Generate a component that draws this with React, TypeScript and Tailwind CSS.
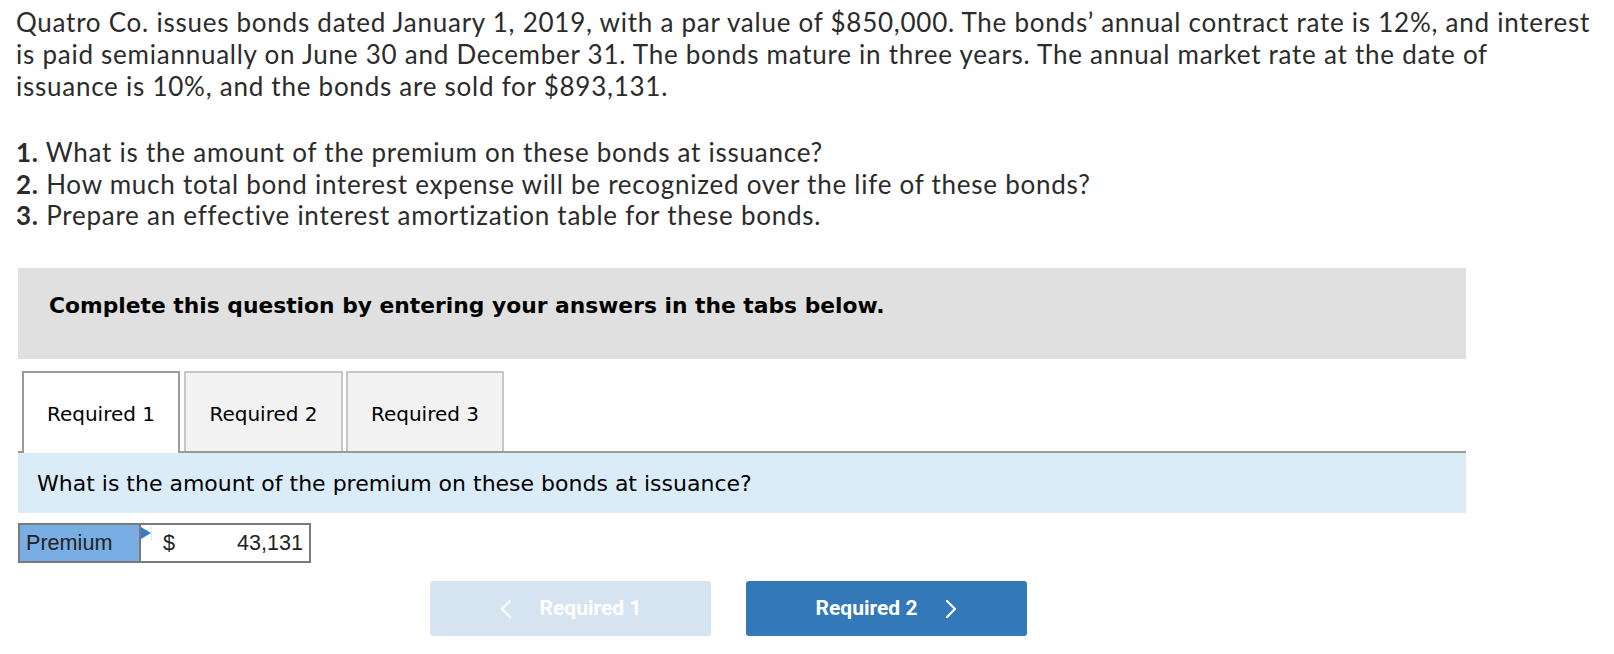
import React from 'react';

function Chevron({ dir }: { dir: 'left' | 'right' }) {
    return (
        <svg width="12" height="20" viewBox="0 0 12 20" fill="none" stroke="currentColor" strokeWidth="2.2" strokeLinecap="round" strokeLinejoin="round">
            {dir === 'left' ? <polyline points="10,2 2,10 10,18" /> : <polyline points="2,2 10,10 2,18" />}
        </svg>
    );
}

export default function App() {
    const body = { fontFamily: 'Lato, "Noto Sans", sans-serif' };
    const verdana = { fontFamily: 'Verdana, "DejaVu Sans", sans-serif' };
    const arial = { fontFamily: 'Arial, "Liberation Sans", sans-serif' };
    const roboto = { fontFamily: 'Roboto, "Noto Sans", sans-serif' };

    return (
        <div className="w-[1614px] h-[654px] overflow-hidden bg-white text-[#2b2b2b]">
            {/* Question text */}
            <div className="pl-[16px] pt-[6px] text-[26px] tracking-[0.75px]" style={body}>
                <p className="leading-[32px] h-[96px]">
                    Quatro Co. issues bonds dated January 1, 2019, with a par value of $850,000. The bonds’ annual contract rate is 12%, and interest<br />
                    is paid semiannually on June 30 and December 31. The bonds mature in three years. The annual market rate at the date of<br />
                    issuance is 10%, and the bonds are sold for $893,131.
                </p>
                <div className="mt-[35px] leading-[31.5px] h-[93px]">
                    <div><span className="font-bold">1.</span> What is the amount of the premium on these bonds at issuance?</div>
                    <div><span className="font-bold">2.</span> How much total bond interest expense will be recognized over the life of these bonds?</div>
                    <div><span className="font-bold">3.</span> Prepare an effective interest amortization table for these bonds.</div>
                </div>
            </div>

            <div className="ml-[18px] w-[1448px]">
                {/* Instruction banner */}
                <div className="mt-[38px] h-[91px] bg-[#e0e0e0] flex items-center pl-[31px] pb-[14px] text-black font-bold text-[21.8px]" style={verdana}>
                    Complete this question by entering your answers in the tabs below.
                </div>

                {/* Tabs */}
                <div className="mt-[12px] flex items-end border-b-2 border-[#999999] text-black text-[20px]" style={verdana}>
                    <div className="ml-[4px] -mb-[2px] w-[158px] h-[82px] border-2 border-b-0 border-[#9a9a9a] bg-white flex items-center justify-center pt-[2px]">
                        Required 1
                    </div>
                    <div className="ml-[4px] w-[159px] h-[80px] border-2 border-b-0 border-[#c6c6c6] bg-[#f2f2f2] flex items-center justify-center pt-[4px]">
                        Required 2
                    </div>
                    <div className="ml-[3px] w-[158px] h-[80px] border-2 border-b-0 border-[#c6c6c6] bg-[#f2f2f2] flex items-center justify-center pt-[4px]">
                        Required 3
                    </div>
                </div>

                {/* Prompt */}
                <div className="h-[60px] bg-[#dbecf9] flex items-center pl-[19px] text-black text-[22px]" style={verdana}>
                    What is the amount of the premium on these bonds at issuance?
                </div>

                {/* Answer row */}
                <div className="mt-[10px] w-[293px] h-[40px] flex border-2 border-[#7a7a7a] text-[21.6px] text-[#222]" style={arial}>
                    <div className="w-[121px] bg-[#78aee3] border-r-2 border-[#7a7a7a] flex items-center pl-[6px]">
                        Premium
                    </div>
                    <div className="relative flex-1 flex items-center pl-[22px] pr-[6px] bg-white">
                        <span className="absolute left-0 top-[2px] w-0 h-0 border-t-[6px] border-b-[6px] border-l-[10px] border-t-transparent border-b-transparent border-l-[#3a7cc3]" />
                        <span className="absolute left-[10px] top-[2px] w-px h-[14px] bg-[#d8e6f3]" />
                        <span>$</span>
                        <span className="ml-auto">43,131</span>
                    </div>
                </div>

                {/* Navigation */}
                <div className="mt-[18px] ml-[412px] flex gap-[35px] text-white font-bold text-[21px]" style={roboto}>
                    <div className="w-[281px] h-[55px] rounded-[3px] bg-[#d6e4f1] flex items-center justify-center gap-[28px]">
                        <Chevron dir="left" />
                        <span>Required 1</span>
                    </div>
                    <div className="w-[281px] h-[55px] rounded-[3px] bg-[#3378b8] flex items-center justify-center gap-[28px]">
                        <span>Required 2</span>
                        <Chevron dir="right" />
                    </div>
                </div>
            </div>
        </div>
    );
}
